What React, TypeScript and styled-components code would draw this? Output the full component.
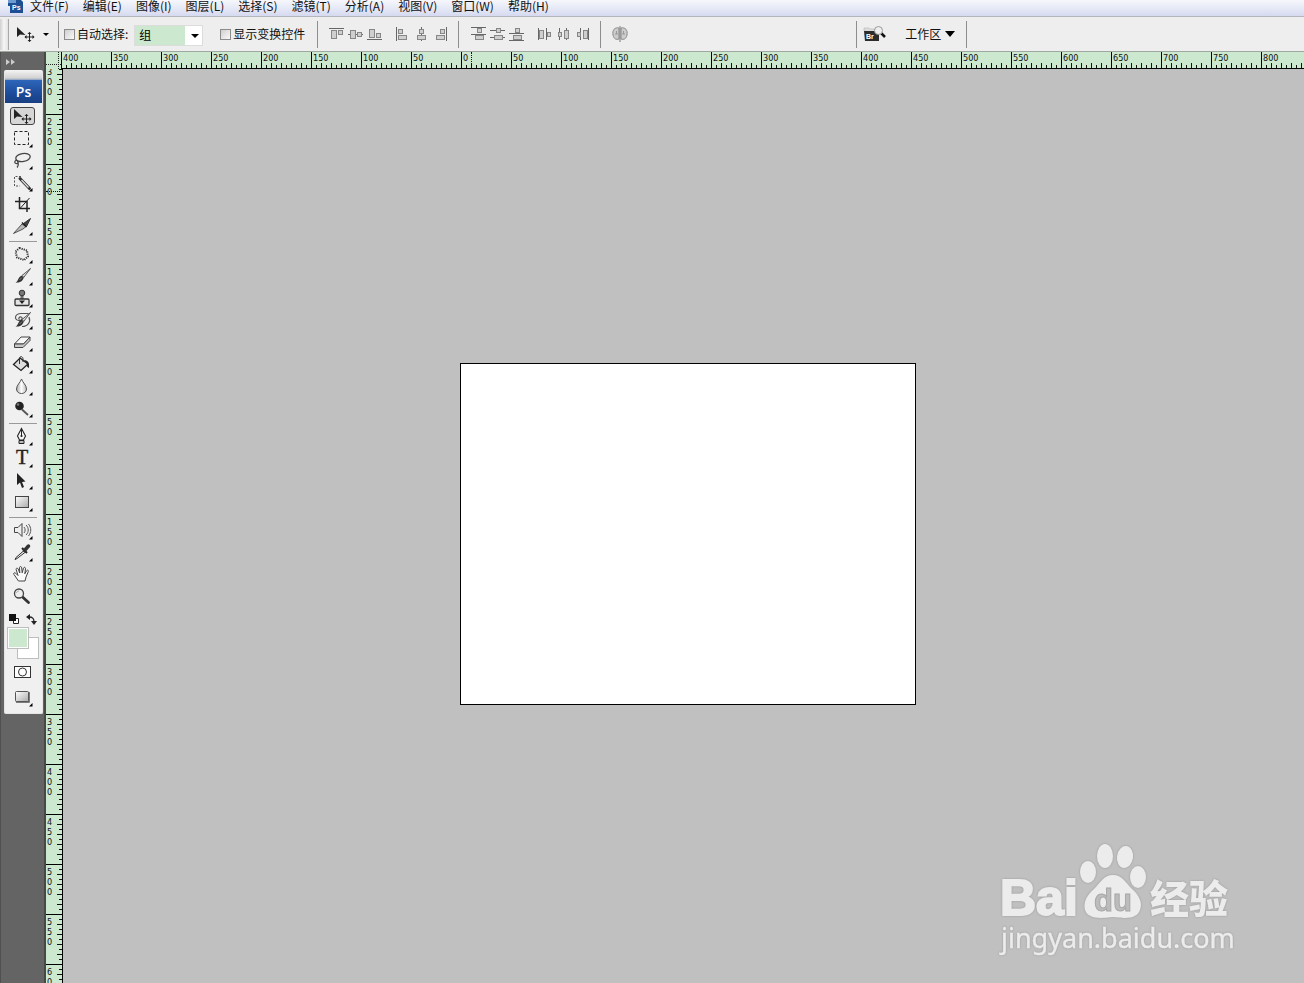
import React from 'react';
import styled, { createGlobalStyle } from 'styled-components';

const uiFont = `"Noto Sans CJK SC", "Liberation Sans", sans-serif`;
const rulerGreen = '#cce8cf';

const GlobalStyle = createGlobalStyle`
  *, *::before, *::after { box-sizing: border-box; }
  html, body, #root { height: 100%; }
  body { margin: 0; overflow: hidden; background: #c0c0c0; font: 12px/14px ${uiFont}; color: #111; }
  button { font: inherit; color: inherit; background: none; border: 0; padding: 0; }
`;

const Page = styled.div`
  display: flex;
  flex-direction: column;
  height: 100%;
`;

const MenuBar = styled.nav`
  display: flex;
  align-items: center;
  gap: 14px;
  flex: none;
  height: 17px;
  padding: 0 8px 4px;
  border-bottom: 1px solid #b4b6be;
  background: linear-gradient(#f6f7fc, #e3e6f5 60%, #d6daf0);
  white-space: nowrap;
`;

const AppLogo = styled.svg`
  flex: none;
  width: 16px;
  height: 14px;
  margin-right: -8px;
`;

const MenuItem = styled.button`
  line-height: 14px;
`;

const OptionsBar = styled.header`
  display: flex;
  align-items: center;
  flex: none;
  height: 35px;
  border-bottom: 1px solid #9fa8a0;
  background: #eeeeee;
  white-space: nowrap;
`;

const Grip = styled.div`
  width: 9px;
  height: 31px;
  border-right: 1px solid #a8a8a8;
  background: linear-gradient(90deg, #d0d0d0, #f6f6f6 50%, #e2e2e2);
`;

const Divider = styled.div`
  flex: none;
  width: 1px;
  height: 27px;
  background: #8e8e8e;
`;

const CurrentTool = styled.button`
  display: flex;
  align-items: center;
  gap: 7px;
  width: 49px;
  padding-left: 7px;
`;

const CheckLabel = styled.label`
  display: flex;
  align-items: center;
  gap: 2px;
  padding-left: 5px;
`;

const CheckBox = styled.input`
  appearance: none;
  width: 11px;
  height: 11px;
  margin: 0;
  border: 1px solid #8c8c8c;
  background: linear-gradient(135deg, #cfcfcf, #fafafa);
`;

const SelectBox = styled.div`
  position: relative;
  width: 69px;
  height: 21px;
  margin: 2px 12px 0 6px;
  border: 1px solid #dcdcdc;
  background: #fff;

  select {
    appearance: none;
    width: 100%;
    height: 19px;
    padding: 0 0 0 4px;
    border: 0;
    border-radius: 0;
    background: linear-gradient(${rulerGreen}, ${rulerGreen}) 0 0 / 50px 100% no-repeat #fff;
    font: inherit;
    color: #000;
  }

  svg {
    position: absolute;
    right: 3px;
    top: 8px;
    pointer-events: none;
  }
`;

const IconGroup = styled.div<{ $left: number; $right: number }>`
  display: flex;
  gap: 3px;
  padding-left: ${p => p.$left}px;
  padding-right: ${p => p.$right}px;

  button { width: 16px; height: 16px; }
  svg { display: block; }
`;

const WorkspaceArea = styled.div`
  display: flex;
  align-items: center;
  margin-left: 228px;
`;

const BridgeButton = styled.button`
  width: 24px;
  height: 18px;
  margin: 0 18px 0 6px;
  svg { display: block; }
`;

const WorkspaceButton = styled.button`
  display: flex;
  align-items: center;
  gap: 4px;
  margin-right: 11px;
`;

const Main = styled.main`
  display: grid;
  grid-template-columns: 46px 1fr;
  flex: 1;
  min-height: 0;
`;

const Dock = styled.aside`
  padding-left: 3px;
  border-left: 1px solid #505050;
  border-right: 2px solid #484848;
  background: #646464;
`;

const Expand = styled.button`
  display: block;
  height: 18px;
  padding: 0 2px;
  svg { display: block; }
`;

const Panel = styled.div`
  width: 39px;
  padding-bottom: 5px;
  border: 1px solid #e4e4e4;
  border-top: 0;
  border-radius: 2px;
  background: #f0f0f0;
`;

const PanelGrip = styled.div`
  height: 10px;
  border-radius: 2px 2px 0 0;
  background: linear-gradient(#f4f4f4, #d2d2d2 80%, #8ba0c0);
`;

const PsBadge = styled.div`
  height: 23px;
  margin-bottom: 2px;
  background: linear-gradient(#2e66ba, #1e4d9c 55%, #183f82);
  font: 600 14px/23px "Open Sans", sans-serif;
  color: #fff;
  text-align: center;
`;

const ToolButton = styled.button`
  display: block;
  width: 37px;
  height: 22px;
  padding-left: 4px;

  svg { display: block; }
`;

const ToolRule = styled.hr`
  height: 1px;
  margin: 4px 5px 1px 4px;
  border: 0;
  background: #9a9a9a;
`;

const ColorTools = styled.div`
  display: flex;
  justify-content: space-between;
  height: 20px;
  padding: 4px 5px 0 4px;
  svg { display: block; }
`;

const Swatches = styled.div`
  display: grid;
  grid-template: 10px 12px 10px / 10px 12px 10px;
  margin: 0 0 2px 2px;
`;

const ViewModes = styled.div`
  display: grid;
  gap: 3px;
`;

const Swatch = styled.button<{ $color: string; $front?: boolean }>`
  grid-area: ${p => (p.$front ? '1 / 1 / 3 / 3' : '2 / 2 / 4 / 4')};
  border: 1px solid #bdbdbd;
  box-shadow: inset 0 0 0 1px #fff;
  background: ${p => p.$color};
`;

const Workspace = styled.section`
  display: grid;
  grid-template: 17px 1fr / 15px 1fr;
  min-width: 0;
  min-height: 0;
`;

const Corner = styled.div`
  position: relative;
  background: ${rulerGreen};
  &::before {
    content: '';
    position: absolute;
    inset: 0 2px 0 0;
    border-right: 1px dotted #222;
  }
  &::after {
    content: '';
    position: absolute;
    inset: 0 0 4px 0;
    border-bottom: 1px dotted #222;
  }
`;

const TopRuler = styled.div`
  position: relative;
  display: flex;
  min-width: 0;
  overflow: hidden;
  border-bottom: 1px solid #000;
  background: ${rulerGreen};
`;

const TopMark = styled.div`
  flex: 0 0 50px;
  height: 16px;
  padding: 1px 0 0 1px;
  border-left: 1px solid #000;
  background:
    repeating-linear-gradient(90deg, transparent 0 9px, #111 9px 10px) 0 100% / 100% 5px no-repeat,
    repeating-linear-gradient(90deg, transparent 0 4px, #111 4px 5px) 0 100% / 100% 3px no-repeat;
  font: 9px/11px "DejaVu Sans Condensed", "DejaVu Sans", sans-serif;

  &:last-of-type { flex: 1 0 auto; }
`;

const Body = styled.div`
  grid-column: 1 / 3;
  display: grid;
  grid-template-columns: 17px 1fr;
  min-height: 0;
`;

const SideRuler = styled.div`
  position: relative;
  min-height: 0;
  overflow: hidden;
  border-right: 1px solid #000;
  background: ${rulerGreen};
`;

const SideMarks = styled.div`
  margin-top: -5px;
`;

const SideMark = styled.div`
  display: flex;
  flex-direction: column;
  height: 50px;
  padding: 2px 0 0 1px;
  border-top: 1px solid #000;
  background:
    repeating-linear-gradient(transparent 0 9px, #111 9px 10px) 100% 0 / 5px 100% no-repeat,
    repeating-linear-gradient(transparent 0 4px, #111 4px 5px) 100% 0 / 3px 100% no-repeat;
  font: 9px/10px "DejaVu Sans Condensed", "DejaVu Sans", sans-serif;
`;

const CursorX = styled.i`
  position: absolute;
  left: 410px;
  top: 0;
  height: 100%;
  border-left: 1px dotted #111;
`;

const CursorY = styled.i`
  position: absolute;
  left: 0;
  top: 122px;
  width: 100%;
  border-top: 1px dotted #111;
`;

const Canvas = styled.div`
  position: relative;
  min-width: 0;
  overflow: hidden;
  padding: 294px 0 0 397px;
  background: #c0c0c0;
`;

const Artboard = styled.div`
  width: 456px;
  height: 342px;
  border: 1px solid #000;
  background: #fff;
`;

const Watermark = styled.svg`
  position: absolute;
  right: 64px;
  bottom: 18px;
  filter: drop-shadow(0 0 1px #999);
`;

const Caret = ({ w = 7, h = 4 }: { w?: number; h?: number }) => (
  <svg width={w} height={h} viewBox={`0 0 ${w} ${h}`}>
    <path d={`M0 0H${w}L${w / 2} ${h}z`} fill="#000" />
  </svg>
);

const moveGlyph = (
  <>
    <path d="M5 4v10l3-2.600 5.500.600z" fill="#222" />
    <path d="M17.500 9.500v9M13 14h9" stroke="#222" />
    <path d="M15.500 11l2-2 2 2zM15.500 17l2 2 2-2zM14.500 12l-2 2 2 2zM20.500 12l2 2-2 2z" fill="#222" />
  </>
);

const brush = (
  <>
    <path d="M21.500 3.500L13 10.500l1.800 1.800z" fill="#ddd" stroke="#333" strokeWidth=".8" />
    <path d="M12.800 10.800l2 1.800c-1 3.500-3.500 5.200-8.300 5.200 2-1 2.300-3.500 3.700-5.300.8-1 1.700-1.500 2.600-1.700z" fill="#333" />
    <path d="M10.500 15l2.500-2.500" stroke="#999" strokeWidth=".8" />
  </>
);

type Tool = { name: string; icon: React.ReactNode; flyout?: boolean; active?: boolean };

const groups: Tool[][] = [
  [
    { name: '移动工具', active: true, icon: <><rect x="1.500" y="2.500" width="24" height="17" rx="2.500" fill="#d6d6d6" stroke="#444" />{moveGlyph}</> },
    { name: '矩形选框工具', flyout: true, icon: <rect x="5.500" y="4.500" width="14" height="13" fill="none" stroke="#222" strokeDasharray="3 2" /> },
    { name: '套索工具', flyout: true, icon: <><ellipse cx="14" cy="8.500" rx="7.300" ry="4" transform="rotate(-10 14 8.500)" fill="none" stroke="#444" strokeWidth="1.300" /><path d="M7.500 11c-2 1-2.500 3-.5 3.500s3-1.500 1.500-2.200c1 2 1.500 4-.5 6.200" fill="none" stroke="#444" strokeWidth="1.200" /></> },
    { name: '快速选择工具', flyout: true, icon: <><path d="M12 5.500H5.500V15H11" fill="none" stroke="#555" strokeDasharray="2 1.500" /><path d="M11 7.500l9.500 10" stroke="#333" strokeWidth="3" strokeLinecap="round" /><path d="M12.500 9l7 7.500" stroke="#ddd" strokeWidth="1.300" /></> },
    { name: '裁剪工具', icon: <><path d="M10.500 4v11.500H21M6 8.500h12V19" fill="none" stroke="#222" strokeWidth="1.500" /><path d="M11 15.500L20.500 5" stroke="#222" /></> },
    { name: '切片工具', flyout: true, icon: <><path d="M21.500 3.500l-4 8-3-3z" fill="#444" stroke="#333" /><path d="M13 9l4 2.500-3 2.500L4.500 18.500z" fill="#bbb" stroke="#333" strokeWidth=".8" /><path d="M13 7.500l4.500 4.500" stroke="#222" strokeWidth="1.500" /></> },
  ],
  [
    { name: '修复画笔工具', flyout: true, icon: <path d="M10.500 5l7.500 2.500 1 6-4 3.500-7-2.500-1.500-6z" fill="#eee" stroke="#333" strokeWidth="2" strokeDasharray="1.200 1" strokeLinejoin="round" /> },
    { name: '画笔工具', flyout: true, icon: brush },
    { name: '仿制图章工具', flyout: true, icon: <><circle cx="13" cy="6" r="2.800" fill="#777" stroke="#333" /><path d="M12 9h2v3h-2z" fill="#999" stroke="#444" strokeWidth=".8" /><rect x="6" y="12" width="14" height="6.500" rx="1" fill="#e4e4e4" stroke="#333" strokeWidth="1.300" /><path d="M10 13.500h6l-3 3.500z" fill="#222" /></> },
    { name: '历史记录画笔', flyout: true, icon: <><path d="M10.500 10.500c-1.500-1 0-3 1.500-2.500 2.500 1 .5 4-2.500 3.500C4.500 10.500 6 4.500 12 4.500h7.500M20 8c2 5-1 9.500-7 9.500" fill="none" stroke="#555" strokeWidth="1.200" />{brush}</> },
    { name: '橡皮擦工具', flyout: true, icon: <><path d="M12 6h9l-6.500 7H5.500z" fill="#f7f7f7" stroke="#444" /><path d="M5.500 13v3.500h8.500L21 9.500V6l-6.500 7z" fill="#c8c8c8" stroke="#444" /></> },
    { name: '油漆桶工具', flyout: true, icon: <><path d="M11 5l8 6-7 6.500-7.500-6z" fill="#ddd" stroke="#222" strokeWidth="1.300" /><path d="M10.500 11V5.500c0-2.500 3-2.500 3.500 0V9" fill="none" stroke="#333" /><path d="M15 7c4.500.5 5.500 3 5 8-1-.5-2.500-1-2-4z" fill="#222" /></> },
    { name: '模糊工具', flyout: true, icon: <path d="M12.500 4c1 3.500 5 6 5 10 0 6-10 6-10 0 0-4 4-6.500 5-10z" fill="url(#drop)" stroke="#555" /> },
    { name: '减淡工具', flyout: true, icon: <><path d="M13 12.500l6 5.500" stroke="#555" strokeWidth="1.800" /><circle cx="10.500" cy="9" r="4.300" fill="#222" /><circle cx="9" cy="7.500" r="1.300" fill="#777" /></> },
  ],
  [
    { name: '钢笔工具', flyout: true, icon: <><path d="M12.500 3.500l4 7.500-2 4h-4l-2-4z" fill="#f5f5f5" stroke="#222" strokeWidth="1.100" /><path d="M12.500 4v7" stroke="#222" /><circle cx="12.500" cy="11" r="1.100" fill="#222" /><path d="M10 15.500h5v3h-5z" fill="#bbb" stroke="#222" /></> },
    { name: '文字工具', flyout: true, icon: <text x="13" y="17" textAnchor="middle" fontFamily="Liberation Serif, serif" fontSize="20" fill="#222" stroke="#222" strokeWidth=".4">T</text> },
    { name: '路径选择工具', flyout: true, icon: <path d="M8 4v12l3-2.500 2 5.500 2-1-2-5 3.500-.5z" fill="#222" /> },
    { name: '矩形工具', flyout: true, icon: <rect x="6.500" y="5.500" width="13" height="11" fill="url(#shade)" stroke="#444" /> },
  ],
  [
    { name: '注释工具', flyout: true, icon: <><path d="M5.500 8.500H9l4-4v13l-4-4H5.500z" fill="#eee" stroke="#444" /><path d="M15 8c1.500 2 1.500 4 0 6M17 6c3 3 3 7 0 10M19.500 5c3 4 3 8 0 12" fill="none" stroke="#555" /></> },
    { name: '吸管工具', flyout: true, icon: <><path d="M15 9.500l-8 7-1 2 2-1 8.500-6.500z" fill="#eee" stroke="#333" /><path d="M13 7l5 5" stroke="#222" strokeWidth="2" /><path d="M15.500 9.500L19.500 5" stroke="#333" strokeWidth="3.500" strokeLinecap="round" /></> },
    { name: '抓手工具', icon: <path d="M9.500 18L5 11.500c-1-1.600.8-2.300 1.700-1.300L9 12.500 7.200 6.700C6.700 5 8.500 4.500 9.200 6l1.600 4-.3-5.200c0-1.700 2-1.700 2.200 0l.5 5 1.300-4.600c.5-1.500 2.200-1 2 .6l-.7 5 1.700-3c.8-1.300 2.300-.6 1.800.8L17 14l-1 4z" fill="#fafafa" stroke="#444" /> },
    { name: '缩放工具', icon: <><path d="M13 11.500l6.500 6" stroke="#333" strokeWidth="2.800" strokeLinecap="round" /><circle cx="10" cy="8.500" r="4.500" fill="#eee" stroke="#444" strokeWidth="1.300" /><path d="M7.500 8c.3-1.500 1.200-2 2.500-2" fill="none" stroke="#aaa" /></> },
  ],
];

const ToolIcon = ({ children, flyout }: { children: React.ReactNode; flyout?: boolean }) => (
  <svg width="28" height="22" viewBox="0 0 28 22">
    <defs>
      <linearGradient id="shade" x1="0" y1="0" x2="1" y2="1"><stop stopColor="#fff" /><stop offset="1" stopColor="#aaa" /></linearGradient>
      <linearGradient id="drop"><stop stopColor="#aaa" /><stop offset=".5" stopColor="#fff" /><stop offset="1" stopColor="#bbb" /></linearGradient>
    </defs>
    {children}
    {flyout && <path d="M23.500 17v3.500H20z" fill="#000" />}
  </svg>
);

type Rect = [number, number, number, number];
type Align = { name: string; line: string; boxes: Rect[] };

const alignVertical: Align[] = [
  { name: '顶对齐', line: 'M0 2.500h15', boxes: [[2, 4, 5, 8], [9, 4, 4, 4]] },
  { name: '垂直居中对齐', line: 'M0 8.500h15', boxes: [[2, 4, 5, 8], [9, 6, 4, 4]] },
  { name: '底对齐', line: 'M0 13.500h15', boxes: [[2, 3, 5, 8], [9, 7, 4, 4]] },
];
const alignHorizontal: Align[] = [
  { name: '左对齐', line: 'M1.500 1v14', boxes: [[3, 3, 4, 4], [3, 9, 8, 4]] },
  { name: '水平居中对齐', line: 'M7.500 1v14', boxes: [[5, 3, 4, 4], [3, 9, 8, 4]] },
  { name: '右对齐', line: 'M13.500 1v14', boxes: [[7, 3, 4, 4], [3, 9, 8, 4]] },
];
const distributeVertical: Align[] = [
  { name: '按顶分布', line: 'M0 1.500h15M0 8.500h15', boxes: [[6, 2, 4, 4], [4, 9, 8, 4]] },
  { name: '垂直居中分布', line: 'M0 4.500h15M0 11.500h15', boxes: [[6, 2, 4, 4], [4, 9, 8, 4]] },
  { name: '按底分布', line: 'M0 7.500h15M0 14.500h15', boxes: [[6, 2, 4, 4], [4, 9, 8, 4]] },
];
const distributeHorizontal: Align[] = [
  { name: '按左分布', line: 'M1.500 2v12M9.500 2v12', boxes: [[2, 4, 4, 8], [10, 6, 3, 4]] },
  { name: '水平居中分布', line: 'M3.500 2v12M10.500 2v12', boxes: [[2, 6, 3, 4], [8, 4, 4, 8]] },
  { name: '按右分布', line: 'M5.500 2v12M13.500 2v12', boxes: [[2, 6, 3, 4], [8, 4, 4, 8]] },
];

const AlignButtons = ({ items, left, right }: { items: Align[]; left: number; right: number }) => (
  <IconGroup $left={left} $right={right}>
    {items.map(item => (
      <button key={item.name} aria-label={item.name}>
        <svg width="16" height="16" viewBox="0 0 16 16">
          <path d={item.line} stroke="#666" />
          {item.boxes.map(([x, y, w, h]) => (
            <rect key={`${x}-${y}`} x={x + 0.5} y={y + 0.5} width={w} height={h} fill="#cfcfcf" stroke="#868686" />
          ))}
        </svg>
      </button>
    ))}
  </IconGroup>
);

const menus = ['文件(F)', '编辑(E)', '图像(I)', '图层(L)', '选择(S)', '滤镜(T)', '分析(A)', '视图(V)', '窗口(W)', '帮助(H)'];

const steps = (from: number, count: number) => Array.from({ length: count }, (_, i) => Math.abs(from + i * 50));
const topMarks = steps(-400, 25);
const sideMarks = steps(-300, 19);

export default function App() {
  return (
    <Page>
      <GlobalStyle />
      <MenuBar>
        <AppLogo viewBox="0 0 16 14">
          <path d="M0 0h12l3 3v11H2V7H0z" fill="#1d4f92" />
          <path d="M0 0h8v4H0z" fill="#6d9bd0" />
          <text x="4" y="11" fontSize="7" fontWeight="700" fontFamily="Liberation Sans, sans-serif" fill="#fff">Ps</text>
        </AppLogo>
        {menus.map(m => <MenuItem key={m}>{m}</MenuItem>)}
      </MenuBar>

      <OptionsBar>
        <Grip />
        <CurrentTool aria-label="移动工具">
          <svg width="20" height="18" viewBox="4 2 20 18">{moveGlyph}</svg>
          <Caret w={6} h={3} />
        </CurrentTool>
        <Divider />
        <CheckLabel><CheckBox type="checkbox" />自动选择:</CheckLabel>
        <SelectBox>
          <select aria-label="自动选择" defaultValue="组">
            <option>组</option>
            <option>图层</option>
          </select>
          <Caret w={8} h={4} />
        </SelectBox>
        <CheckLabel><CheckBox type="checkbox" />显示变换控件</CheckLabel>
        <IconGroup $left={12} $right={0}><Divider /></IconGroup>
        <AlignButtons items={alignVertical} left={11} right={0} />
        <AlignButtons items={alignHorizontal} left={12} right={9} />
        <Divider />
        <AlignButtons items={distributeVertical} left={12} right={0} />
        <AlignButtons items={distributeHorizontal} left={12} right={9} />
        <Divider />
        <IconGroup $left={11} $right={0}>
          <button aria-label="自动对齐图层">
            <svg width="16" height="16" viewBox="0 0 16 16">
              <path d="M7 2C3 1 0 4 1 9c1 4 3 5 6 4zM9 2c4-1 7 2 6 7-1 4-3 5-6 4z" fill="#ccc" stroke="#8a8a8a" />
              <path d="M8 0v16" stroke="#777" />
              <path d="M3 8h3M4.500 5v3M10 8h3M11.500 5v3" stroke="#999" />
            </svg>
          </button>
        </IconGroup>
        <WorkspaceArea>
          <Divider />
          <BridgeButton aria-label="转到 Bridge">
            <svg width="24" height="18" viewBox="0 0 24 18">
              <path d="M1 6V3h5l1 1h5v3z" fill="#ddd" stroke="#aaa" strokeWidth=".5" />
              <path d="M1 6h15v10H2z" fill="#2c2c2c" />
              <text x="3" y="14" fontSize="7" fontWeight="700" fontFamily="Liberation Sans, sans-serif" fill="#fff">Br</text>
              <path d="M18 8l4 4" stroke="#111" strokeWidth="2.500" />
              <circle cx="15.500" cy="5.500" r="4" fill="#eee" stroke="#999" />
            </svg>
          </BridgeButton>
          <WorkspaceButton>工作区<Caret w={10} h={6} /></WorkspaceButton>
          <Divider />
        </WorkspaceArea>
      </OptionsBar>

      <Main>
        <Dock>
          <Expand aria-label="展开面板">
            <svg width="10" height="18" viewBox="0 0 10 18"><path d="M0 7l4 3-4 3zM5 7l4 3-4 3z" fill="#ccc" /></svg>
          </Expand>
          <Panel>
            <PanelGrip />
            <PsBadge>Ps</PsBadge>
            {groups.map((tools, i) => (
              <React.Fragment key={i}>
                {i > 0 && <ToolRule />}
                {tools.map(t => (
                  <ToolButton key={t.name} aria-label={t.name} aria-pressed={!!t.active}>
                    <ToolIcon flyout={t.flyout}>{t.icon}</ToolIcon>
                  </ToolButton>
                ))}
              </React.Fragment>
            ))}
            <ColorTools>
              <button aria-label="默认颜色">
                <svg width="11" height="11" viewBox="0 0 11 11"><path d="M4.500 4.500h5v5h-5z" fill="#fff" stroke="#222" /><path d="M0 0h7v7H0z" fill="#111" /></svg>
              </button>
              <button aria-label="切换颜色">
                <svg width="11" height="11" viewBox="0 0 11 11"><path d="M3 3c4 0 5 1.500 5 5" fill="none" stroke="#222" strokeWidth="1.300" /><path d="M0 3l4-3v6zM5 7h6l-3 4z" fill="#222" /></svg>
              </button>
            </ColorTools>
            <Swatches>
              <Swatch $color="#fff" aria-label="背景色" />
              <Swatch $front $color={rulerGreen} aria-label="前景色" />
            </Swatches>
            <ViewModes>
              <ToolButton aria-label="快速蒙版">
                <ToolIcon>
                  <rect x="5.500" y="5.500" width="16" height="11" fill="#fff" stroke="#333" />
                  <circle cx="13.500" cy="11" r="4" fill="#fff" stroke="#333" />
                </ToolIcon>
              </ToolButton>
              <ToolButton aria-label="屏幕模式">
                <ToolIcon flyout>
                  <path d="M7 16h13V6" fill="none" stroke="#555" strokeWidth="1.500" />
                  <rect x="6.500" y="5.500" width="13" height="10" rx="1" fill="url(#shade)" stroke="#555" />
                </ToolIcon>
              </ToolButton>
            </ViewModes>
          </Panel>
        </Dock>

        <Workspace>
          <Corner />
          <TopRuler>
            {topMarks.map((n, i) => <TopMark key={i}>{n}</TopMark>)}
            <CursorX />
          </TopRuler>
          <Body>
            <SideRuler>
              <SideMarks>
                {sideMarks.map((n, i) => (
                  <SideMark key={i}>{String(n).split('').map((d, j) => <span key={j}>{d}</span>)}</SideMark>
                ))}
              </SideMarks>
              <CursorY />
            </SideRuler>
            <Canvas>
              <Artboard />
              <Watermark width="244" height="126" viewBox="0 0 244 126" fill="#ececec">
                <text x="4" y="76" fontFamily="Liberation Sans, sans-serif" fontWeight="700" fontSize="50" stroke="#ececec" strokeWidth="2">Bai</text>
                <ellipse cx="92" cy="33" rx="8" ry="11" />
                <ellipse cx="109" cy="17" rx="8" ry="12" />
                <ellipse cx="129" cy="18" rx="8" ry="11" transform="rotate(8 129 18)" />
                <ellipse cx="142" cy="38" rx="8" ry="11" />
                <path d="M117 36c9 0 13 8 19 14 7 6 11 14 8 21-3 8-11 9-27 7-16 2-25 1-28-7-2-8 2-15 9-21 6-6 10-14 19-14z" />
                <text x="98" y="72" fontFamily="Liberation Sans, sans-serif" fontWeight="700" fontSize="31" fill="#bcbcbc" stroke="#a8a8a8">du</text>
                <text x="154" y="74" fontFamily="Noto Sans CJK SC, sans-serif" fontWeight="900" fontSize="39">经验</text>
                <text x="5" y="109" fontFamily="Noto Sans, sans-serif" fontSize="27" stroke="#ececec" strokeWidth=".4">jingyan.baidu.com</text>
              </Watermark>
            </Canvas>
          </Body>
        </Workspace>
      </Main>
    </Page>
  );
}
